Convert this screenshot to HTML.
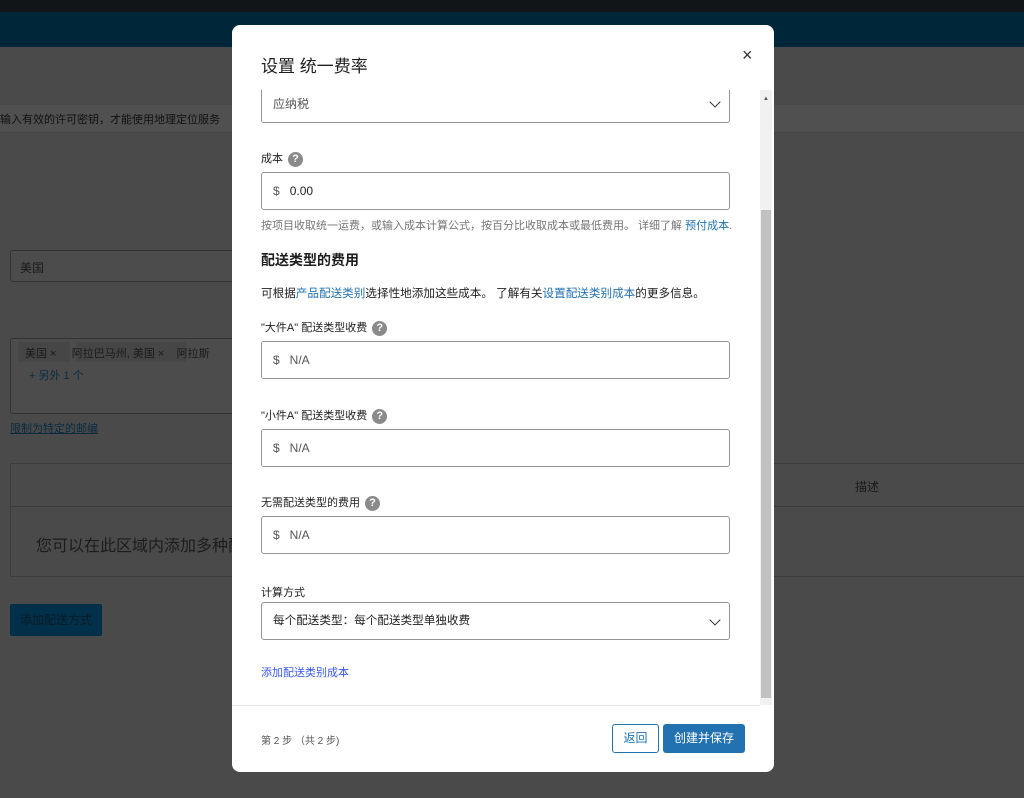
<!DOCTYPE html>
<html><head><meta charset="utf-8"><style>
*{box-sizing:border-box;margin:0;padding:0}
body{width:1024px;height:798px;overflow:hidden;background:#4a4a4a;font-family:"Liberation Sans","Noto Sans CJK SC",sans-serif;position:relative;font-size:12px;color:#1e1e1e}
.abs{position:absolute}
.dim{color:#1a1a1a}
.inp{position:absolute;left:261px;width:469px;height:38px;border:1px solid #949494;border-radius:3px;background:#fff;font-size:12px;color:#555;padding-left:11px;line-height:36px}
.q{display:inline-block;width:15px;height:15px;border-radius:50%;background:#8a8a8a;color:#fff;font-size:11px;font-weight:bold;text-align:center;line-height:15px;vertical-align:middle;margin-left:5px}
.lbl{position:absolute;left:261px;font-size:11px;color:#1e1e1e}
a{color:#2271b1;text-decoration:none}
.chev{position:absolute;right:10px;top:13px;width:8px;height:8px;border-right:1.6px solid #333;border-bottom:1.6px solid #333;transform:rotate(45deg)}
</style></head><body>
<div class="abs" style="left:0;top:0;width:1024px;height:12px;background:#121517"></div>
<div class="abs" style="left:0;top:12px;width:1024px;height:35px;background:#00263a"></div>
<div class="abs" style="left:0;top:105px;width:1024px;height:28px;background:#505050;border-bottom:1px solid #444"></div>
<div class="abs dim" style="left:0;top:111px;font-size:11px;color:#111">输入有效的许可密钥，才能使用地理定位服务</div>
<div class="abs" style="left:10px;top:250px;width:230px;height:32px;border:1px solid #333;border-radius:3px;background:#4c4c4c"></div>
<div class="abs dim" style="left:20px;top:259px;font-size:12px">美国</div>
<div class="abs" style="left:10px;top:338px;width:230px;height:76px;border:1px solid #333;border-radius:3px;background:#4c4c4c"></div>
<div class="abs" style="left:18px;top:342px;width:52px;height:20px;background:#464646"></div>
<div class="abs" style="left:76px;top:342px;width:110px;height:20px;background:#464646"></div>
<div class="abs dim" style="left:25px;top:345px;font-size:11px">美国 ×&nbsp;&nbsp;&nbsp;&nbsp;&nbsp;阿拉巴马州, 美国 ×&nbsp;&nbsp;&nbsp;&nbsp;阿拉斯</div>
<div class="abs" style="left:29px;top:367px;font-size:11px;color:#0a2a40">+ 另外 1 个</div>
<div class="abs" style="left:10px;top:420px;font-size:11px;color:#0a2a40;text-decoration:underline">限制为特定的邮编</div>
<div class="abs" style="left:10px;top:463px;width:1014px;height:114px;border:1px solid #3c3c3c;border-right:none"></div>
<div class="abs" style="left:10px;top:506px;width:1014px;height:1px;background:#3c3c3c"></div>
<div class="abs dim" style="left:855px;top:478px;font-size:12px">描述</div>
<div class="abs" style="left:36px;top:532px;font-size:16px;color:#1c1c1c">您可以在此区域内添加多种配</div>
<div class="abs" style="left:10px;top:604px;width:92px;height:32px;background:#00304a;border-radius:2px;font-size:12px;line-height:32px;text-align:center;color:#0c1c25">添加配送方式</div>

<div class="abs" style="left:232px;top:25px;width:542px;height:747px;background:#fff;border-radius:8px;overflow:hidden"></div>
<div class="abs" style="left:261px;top:52px;font-size:17px;color:#1e1e1e">设置 统一费率</div>
<div class="abs" style="left:742px;top:45px;font-size:18px;color:#333">×</div>
<div class="abs" style="left:760px;top:90px;width:12px;height:615px;background:#f1f1f1"></div>
<div class="abs" style="left:761px;top:210px;width:10px;height:488px;background:#c1c1c1"></div>
<div class="abs" style="left:763px;top:96px;font-size:6px;color:#555">▲</div>
<div class="inp" style="top:90px;height:33px;border-top:none;border-radius:0 0 3px 3px;line-height:28px">应纳税<span class="chev" style="top:8px"></span></div>
<div class="lbl" style="top:150px">成本<span class="q">?</span></div>
<div class="inp" style="top:172px"><span style="color:#555">$</span>&nbsp;&nbsp;&nbsp;<span style="color:#1e1e1e">0.00</span></div>
<div class="abs" style="left:261px;top:217px;font-size:11px;color:#757575;white-space:nowrap">按项目收取统一运费，或输入成本计算公式，按百分比收取成本或最低费用。 详细了解 <a>预付成本</a>.</div>
<div class="abs" style="left:261px;top:250px;font-size:14px;font-weight:bold">配送类型的费用</div>
<div class="abs" style="left:261px;top:285px;font-size:11.6px;white-space:nowrap">可根据<a>产品配送类别</a>选择性地添加这些成本。 了解有关<a>设置配送类别成本</a>的更多信息。</div>
<div class="lbl" style="top:319px">"大件A" 配送类型收费<span class="q">?</span></div>
<div class="inp" style="top:341px">$&nbsp;&nbsp;&nbsp;N/A</div>
<div class="lbl" style="top:407px">"小件A" 配送类型收费<span class="q">?</span></div>
<div class="inp" style="top:429px">$&nbsp;&nbsp;&nbsp;N/A</div>
<div class="lbl" style="top:494px">无需配送类型的费用<span class="q">?</span></div>
<div class="inp" style="top:516px">$&nbsp;&nbsp;&nbsp;N/A</div>
<div class="lbl" style="top:584px">计算方式</div>
<div class="inp" style="top:602px;color:#1e1e1e;font-size:11.6px">每个配送类型：每个配送类型单独收费<span class="chev"></span></div>
<div class="abs" style="left:261px;top:664px;font-size:11px;color:#3858e9">添加配送类别成本</div>
<div class="abs" style="left:232px;top:705px;width:528px;height:1px;background:#e5e5e5"></div>
<div class="abs" style="left:261px;top:732px;font-size:10px;color:#555">第 2 步 （共 2 步)</div>
<div class="abs" style="left:612px;top:724px;width:47px;height:29px;border:1px solid #2271b1;border-radius:3px;color:#2271b1;text-align:center;line-height:27px;font-size:12px">返回</div>
<div class="abs" style="left:663px;top:724px;width:82px;height:29px;background:#2271b1;border-radius:3px;color:#fff;text-align:center;line-height:29px;font-size:12px">创建并保存</div>
</body></html>
